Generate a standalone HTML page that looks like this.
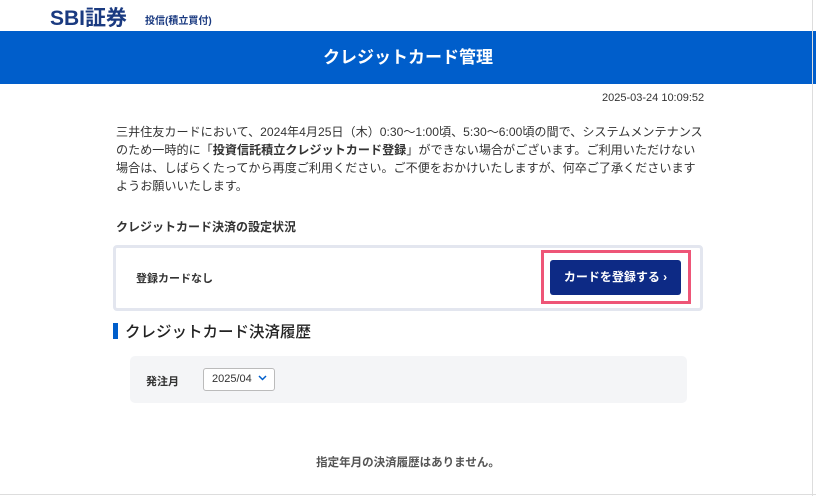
<!DOCTYPE html>
<html><head><meta charset="utf-8"><style>
*{margin:0;padding:0;box-sizing:border-box}
body{width:816px;height:496px;background:#fff;font-family:"Liberation Sans","Noto Sans CJK JP",sans-serif;color:#333;position:relative;overflow:hidden}
.a{position:absolute;white-space:nowrap}
</style></head><body>
<div class="a" style="left:50px;top:2px;font-size:21px;font-weight:bold;color:#1a3a80;letter-spacing:0px">SBI証券</div>
<div class="a" style="left:145px;top:12px;font-size:10px;font-weight:bold;color:#1a3a80">投信(積立買付)</div>
<div class="a" style="left:0;top:31px;width:816px;height:53px;background:#005ecb"></div>
<div class="a" style="left:0;top:31px;width:816px;height:53px;line-height:53px;text-align:center;color:#fff;font-size:17px;font-weight:bold">クレジットカード管理</div>
<div class="a" style="left:602px;top:92px;font-size:11px;color:#333">2025-03-24 10:09:52</div>
<div class="a" style="left:116px;top:123px;font-size:12.1px;line-height:18px;color:#333">三井住友カードにおいて、2024年4月25日（木）0:30～1:00頃、5:30～6:00頃の間で、システムメンテナンス<br>のため一時的に「<b>投資信託積立クレジットカード登録</b>」ができない場合がございます。ご利用いただけない<br>場合は、しばらくたってから再度ご利用ください。ご不便をおかけいたしますが、何卒ご了承くださいます<br>ようお願いいたします。</div>
<div class="a" style="left:116px;top:218px;font-size:12px;font-weight:bold;color:#333">クレジットカード決済の設定状況</div>
<div class="a" style="left:113px;top:245px;width:590px;height:66px;border:3px solid #e3e6ef;border-radius:4px"></div>
<div class="a" style="left:136px;top:270px;font-size:11px;font-weight:bold;color:#333">登録カードなし</div>
<div class="a" style="left:541px;top:250px;width:150px;height:54px;border:3px solid #ee5577"></div>
<div class="a" style="left:550px;top:260px;width:131px;height:35px;background:#0d2a85;border-radius:3px;color:#fff;font-size:12px;font-weight:bold;line-height:35px;text-align:center">カードを登録する ›</div>
<div class="a" style="left:113px;top:323px;width:5px;height:16px;background:#005ecb"></div>
<div class="a" style="left:125px;top:320px;font-size:15.5px;color:#222;font-weight:500">クレジットカード決済履歴</div>
<div class="a" style="left:130px;top:356px;width:557px;height:47px;background:#f4f5f7;border-radius:5px"></div>
<div class="a" style="left:146px;top:373px;font-size:11px;font-weight:bold;color:#333">発注月</div>
<div class="a" style="left:203px;top:368px;width:72px;height:23px;background:#fff;border:1px solid #bbb;border-radius:3px;font-size:11px;line-height:21px;padding-left:8px;color:#333">2025/04<svg width="9" height="6" viewBox="0 0 9 6" style="margin-left:6px;vertical-align:1px"><path d="M1 1L4.5 4.5L8 1" fill="none" stroke="#005ecb" stroke-width="1.5"/></svg></div>
<div class="a" style="left:0;top:454px;width:816px;text-align:center;font-size:11.5px;font-weight:bold;color:#555">指定年月の決済履歴はありません。</div>
<div class="a" style="left:812px;top:0;width:1px;height:496px;background:#ddd"></div>
<div class="a" style="left:0;top:494px;width:816px;height:1px;background:#ddd"></div>
</body></html>
